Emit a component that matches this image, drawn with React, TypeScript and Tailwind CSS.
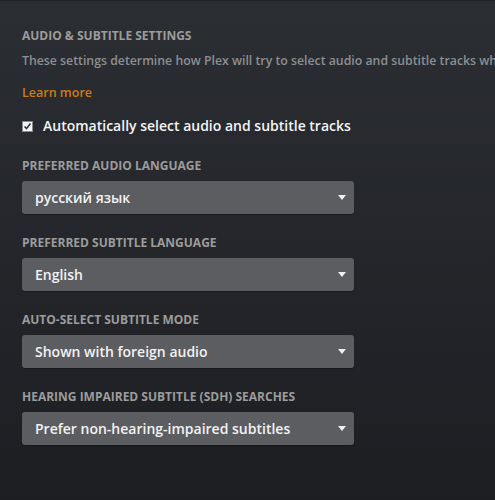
import React from 'react';

const font = { fontFamily: '"Open Sans", "Noto Sans", sans-serif' };

interface SelectRowProps {
  label: string;
  value: string;
}

const SelectRow: React.FC<SelectRowProps> = ({ label, value }) => (
  <div className="flex flex-col">
    <div className="text-[12px] font-bold uppercase text-[#9c9c9c] leading-[18px] mb-[6px]">{label}</div>
    <div className="relative w-[332px] h-[33px] rounded-[3px] bg-[#5c5d61] shadow-[0_1px_1px_rgba(0,0,0,0.35)] flex items-center pl-[13px]">
      <span className="text-[14px] font-semibold text-[#f2f2f2]">{value}</span>
      <svg className="absolute right-[8px] top-[14px]" width="8" height="5" viewBox="0 0 8 5">
        <path d="M0 0 H8 L4 5 Z" fill="#f0f0f0" />
      </svg>
    </div>
  </div>
);

export default function App() {
  return (
    <div
      className="w-[495px] h-[500px] overflow-hidden bg-[linear-gradient(to_bottom,#2b2e33,#1d1e22)] border-t border-[#1f2226]"
      style={font}
    >
      <div className="pl-[22px] pt-[27px] flex flex-col">
        <div className="text-[12px] font-bold uppercase text-[#9c9c9c] leading-[16px]">Audio &amp; Subtitle Settings</div>
        <div className="mt-[8px] text-[12.3px] font-semibold text-[#8e8f91] whitespace-nowrap leading-[18px]">
          These settings determine how Plex will try to select audio and subtitle tracks when playing
        </div>
        <div className="mt-[14px] text-[12.5px] font-semibold text-[#cc7b19] leading-[18px]">Learn more</div>
        <label className="mt-[14px] flex items-center gap-[10px]">
          <span className="w-[11px] h-[11px] bg-[#f4f4f4] border border-[#8a8a8a] flex items-center justify-center">
            <svg width="9" height="9" viewBox="0 0 9 9">
              <path d="M1.5 4.5 L3.5 6.5 L7.5 1.5" stroke="#2a3550" strokeWidth="1.6" fill="none" />
            </svg>
          </span>
          <span className="text-[14px] font-semibold text-[#f4f4f4] leading-[20px]">Automatically select audio and subtitle tracks</span>
        </label>
        <div className="mt-[21px] flex flex-col gap-[20px]">
          <SelectRow label="Preferred Audio Language" value="русский язык" />
          <SelectRow label="Preferred Subtitle Language" value="English" />
          <SelectRow label="Auto-Select Subtitle Mode" value="Shown with foreign audio" />
          <SelectRow label="Hearing Impaired Subtitle (SDH) Searches" value="Prefer non-hearing-impaired subtitles" />
        </div>
      </div>
    </div>
  );
}
